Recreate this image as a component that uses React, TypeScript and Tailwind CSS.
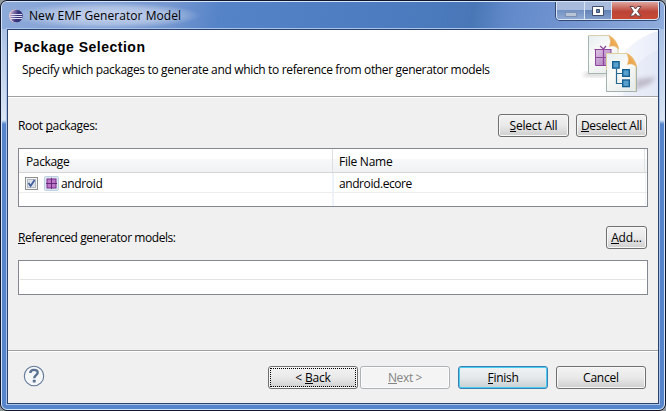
import React from "react";

const type = "font-['Open_Sans','Noto_Sans',sans-serif] text-[12px] leading-[16px] whitespace-nowrap";
const ui = `${type} text-black`;

const buttonLooks = {
  normal: "border-[#707070] text-black from-[#f3f3f3] via-[#e9e9e9] to-[#cfcfcf] shadow-[inset_0_0_0_1px_#f8f8f8]",
  disabled: "border-[#adb2b5] text-[#838383] from-[#f4f4f4] via-[#f4f4f4] to-[#f4f4f4] shadow-[inset_0_0_0_1px_#fcfcfc]",
  primary: "border-[#3c7fb1] text-black from-[#f0f3f4] via-[#e5e9eb] to-[#c9d0d2] shadow-[inset_0_0_0_1px_#48cdf5]",
};

function Key({ children }: { children: React.ReactNode }) {
  return <span className="inline-block h-[14px] border-b border-current leading-[16px]">{children}</span>;
}

function Button({ look = "normal", className = "", text = "", children }: { look?: keyof typeof buttonLooks; className?: string; text?: string; children: React.ReactNode }) {
  return (
    <button className={`${type} flex h-[23px] shrink-0 items-center justify-center rounded-[3px] border bg-linear-to-b from-0% via-50% ${buttonLooks[look]} ${className}`}>
      <span className={text}>{children}</span>
    </button>
  );
}

function EclipseLogo() {
  return (
    <svg className="h-[14px] w-[14px] shrink-0" viewBox="0 0 14 14">
      <defs>
        <linearGradient id="ecl" x1="0" y1="0" x2="1" y2="0.3">
          <stop offset="0" stopColor="#d5b2cc" />
          <stop offset=".3" stopColor="#8579ad" />
          <stop offset=".65" stopColor="#37337b" />
          <stop offset="1" stopColor="#39327a" />
        </linearGradient>
      </defs>
      <ellipse cx="6" cy="7" rx="6" ry="6.5" fill="#e9c6cc" />
      <circle cx="7.5" cy="7" r="6.3" fill="url(#ecl)" />
      <path d="M1.6 5.5h11.6M1.3 7.5h12M1.6 9.5h11.6" stroke="#dedff2" strokeWidth="1" />
    </svg>
  );
}

function WizardArt() {
  return (
    <svg className="h-[66px] w-[88px]" viewBox="570 30 88 66">
      <defs>
        <linearGradient id="swoosh" x1="0" y1="0" x2="1" y2="0">
          <stop offset="0" stopColor="#fff" />
          <stop offset="1" stopColor="#dfe5f6" />
        </linearGradient>
        <linearGradient id="page" x1="0" y1="0" x2=".6" y2="1">
          <stop offset="0" stopColor="#e6eef0" />
          <stop offset=".5" stopColor="#fbfbf8" />
          <stop offset="1" stopColor="#e8edec" />
        </linearGradient>
        <linearGradient id="fold" x1="0" y1="1" x2="1" y2="0">
          <stop offset="0" stopColor="#e08f2e" />
          <stop offset="1" stopColor="#fbc97f" />
        </linearGradient>
        <linearGradient id="gift" x1="0" y1="0" x2="1" y2="1">
          <stop offset="0" stopColor="#dec4e4" />
          <stop offset="1" stopColor="#a876b9" />
        </linearGradient>
        <filter id="soft" x="-50%" y="-50%" width="200%" height="200%"><feGaussianBlur stdDeviation="2" /></filter>
      </defs>
      <path d="M658 31C637 37 621 51 612 72L598 96H658Z" fill="url(#swoosh)" opacity=".7" />
      <path d="M658 50C641 56 632 69 623 96H658Z" fill="#d6ddf2" opacity=".3" />
      <path d="M635 90L637 79L656 77L650 84Z" fill="#86758a" opacity=".4" filter="url(#soft)" />
      <path d="M586 73H609L605 76H583Z" fill="#777" opacity=".45" filter="url(#soft)" />
      <path d="M588.5 35.5H609L618 46V73.5H588.5Z" fill="url(#page)" stroke="#d9cfad" />
      <path d="M588.5 36V73.5H607" fill="none" stroke="#a4b6b2" />
      <path d="M609 35.5Q612 41 609.5 46.5Q614 44 618.5 49Q617 39.5 609 35.5Z" fill="url(#fold)" stroke="#e8b56c" strokeWidth=".7" />
      <path d="M595.5 49.5H611V65.5H595.5Z" fill="url(#gift)" stroke="#8d459d" />
      <path d="M594.5 49.5H611.5M595.5 57.5H611M603.5 49V65M603.5 49L600 46M603.5 49L606 46" fill="none" stroke="#8d459d" strokeWidth="1.2" />
      <path d="M606.5 53.5H627L636 64V91.5H606.5Z" fill="url(#page)" stroke="#ded19f" />
      <path d="M606.5 70V91.5H636.5V67" fill="none" stroke="#a4b2ad" />
      <path d="M627 53.5Q630 59 627.5 64.5Q632 62 636.5 67Q635 57.5 627 53.5Z" fill="url(#fold)" stroke="#e8b56c" strokeWidth=".7" />
      <path d="M616.5 69V83.5H623M616.5 73.5H623" fill="none" stroke="#266894" strokeWidth="1.2" />
      <g fill="#57a0ce" stroke="#145f94" strokeWidth="1.4">
        <rect x="612.7" y="61.7" width="6.4" height="6.4" />
        <rect x="622.7" y="69.7" width="6.6" height="6.6" />
        <rect x="622.7" y="80" width="6.6" height="6.6" />
      </g>
    </svg>
  );
}

function WindowControls() {
  return (
    <div className="flex h-[18px] w-[103px] shrink-0 overflow-hidden rounded-b-[4px] border border-t-0 border-[#dce6f5] shadow-[0_0_0_1px_#304975]">
      <div className="flex w-[28px] items-center justify-center border-r border-[#d9e4f4] bg-linear-to-b from-[#a8bbdc] from-45% via-[#7391c2] via-50% to-[#90abd4]">
        <svg width="12" height="16" viewBox="0 0 12 16"><rect x=".5" y="9.5" width="11" height="4" fill="#b8c5d7" stroke="#7b90b2" /></svg>
      </div>
      <div className="flex w-[27px] items-center justify-center border-r border-[#d9e4f4] bg-linear-to-b from-[#a8bbdc] from-45% via-[#6484b7] via-50% to-[#819ecb]">
        <svg width="13" height="16" viewBox="0 0 13 16"><path fillRule="evenodd" d="M.5 3.5H11.5V12.5H.5ZM4.5 6.5V9.5H7.5V6.5Z" fill="#fff" stroke="#3e4d69" /></svg>
      </div>
      <div className="flex grow items-center justify-center bg-linear-to-b from-[#dda49e] from-0% via-[#bc4438] via-55% to-[#c74933]">
        <svg width="15" height="16" viewBox="0 0 15 16"><path d="M2 3.5H5.5L7.5 6L9.5 3.5H13L9.6 8.3L13 13H9.4L7.5 10.6L5.6 13H2L5.4 8.3Z" fill="#fff" stroke="#65444d" /></svg>
      </div>
    </div>
  );
}

function TitleBar() {
  return (
    <div className="flex h-[27px] w-full shrink-0 items-start justify-between bg-[linear-gradient(100deg,#8ca9d9_0%,#7698d0_25%,#5583c8_33%,#4a79bc_66%,#4977b6_71%,#6189c9_76%,#7294d0_85%,#8facdc_100%)] pl-[7px] pr-[5px]">
      <div className="flex h-[27px] items-center gap-[6px] bg-[radial-gradient(closest-side,#bccbe9_30%,#a9bee2_65%,transparent)] pr-[20px]">
        <EclipseLogo />
        <span className={`${ui} tracking-[0.06px]`}>New EMF Generator Model</span>
      </div>
      <WindowControls />
    </div>
  );
}

function Header() {
  return (
    <div className="flex h-[67px] shrink-0 justify-between border-b border-[#a0a0a0] bg-white">
      <div className="flex flex-col pt-[9px] pl-[6px]">
        <h1 className="font-['Liberation_Sans',sans-serif] text-[14px] font-bold leading-[16px] tracking-[0.5px] text-black whitespace-nowrap">Package Selection</h1>
        <p className={`${ui} mt-[7px] pl-[8px] tracking-[-0.34px]`}>Specify which packages to generate and which to reference from other generator models</p>
      </div>
      <WizardArt />
    </div>
  );
}

function PackageIcon() {
  return (
    <svg className="h-[15px] w-[15px] shrink-0" viewBox="0 0 15 15">
      <rect x=".5" y=".5" width="14" height="14" rx="1" fill="#dce6f0" stroke="#bfd0e1" />
      <rect x="3" y="3" width="9" height="9" fill="#bd79c8" stroke="#792d8d" />
      <path d="M2 7.5H13M7.5 1.8V13" stroke="#682878" />
    </svg>
  );
}

function PackageTable() {
  return (
    <div className="h-[59px] w-[630px] shrink-0 border border-[#828790] bg-white">
      <div className="flex h-[24px] border-b border-[#d5d5d5] bg-linear-to-b from-white from-45% via-[#f7f8fa] via-45% to-[#f1f2f4]">
        <div className="flex w-[314px] items-center border-r border-[#dedfe1] pl-[7px] pt-[2px]"><span className={`${ui} tracking-[-0.35px]`}>Package</span></div>
        <div className="mr-[2px] flex grow items-center border-r border-[#e2e3e5] pl-[6px] pt-[2px]"><span className={`${ui} tracking-[-0.25px]`}>File Name</span></div>
      </div>
      <div className="flex h-[20px] border-b border-[#ededed]">
        <div className="flex w-[315px] items-center border-r-2 border-[#edf2fb] pt-[2px] pl-[6px]">
          <svg className="h-[13px] w-[13px] shrink-0" viewBox="0 0 13 13">
            <rect x=".5" y=".5" width="12" height="12" fill="#f4f4f4" stroke="#8e8f8f" />
            <rect x="2.5" y="2.5" width="8" height="8" fill="#dce1e8" stroke="#b4bac2" />
            <path d="M3.5 6L5.6 9L9.6 3" fill="none" stroke="#405f9e" strokeWidth="1.8" />
          </svg>
          <span className="ml-[6px] flex"><PackageIcon /></span>
          <span className={`${ui} ml-[2px] tracking-[-0.35px]`}>android</span>
        </div>
        <div className="mr-[1px] flex grow items-center border-r border-[#edf2fb] pt-[2px] pl-[5px]"><span className={`${ui} tracking-[-0.42px]`}>android.ecore</span></div>
      </div>
      <div className="flex h-[13px]">
        <div className="w-[315px] border-r-2 border-[#edf2fb]" />
        <div className="mr-[1px] grow border-r border-[#edf2fb]" />
      </div>
    </div>
  );
}

function Footer() {
  return (
    <div className="flex h-[53px] shrink-0 items-start border-t border-[#a0a0a0] pr-[12px] pl-[15px] shadow-[inset_0_1px_0_#fff]">
      <svg className="mt-[14px] mr-auto h-[22px] w-[22px]" viewBox="0 0 22 22">
        <circle cx="11" cy="11" r="9.7" fill="#f5f6f7" stroke="#617798" strokeWidth="1.1" />
        <path d="M7.3 8C7.3 3.8 14.8 3.9 14.7 7.6C14.7 10 11.2 10.3 11.2 13.2" fill="none" stroke="#5b7193" strokeWidth="2.4" />
        <rect x="9.8" y="14.8" width="2.8" height="2.7" rx=".5" fill="#5b7193" />
      </svg>
      <div className="flex pt-[15px]">
        <Button className="w-[90px] outline outline-1 outline-dotted outline-offset-[-3px] outline-black" text="tracking-[-0.2px]">&lt; <Key>B</Key>ack</Button>
        <Button look="disabled" className="ml-[2px] w-[90px]" text="tracking-[-0.35px]"><Key>N</Key>ext &gt;</Button>
        <Button look="primary" className="ml-[8px] w-[90px]" text="tracking-[-0.3px]"><Key>F</Key>inish</Button>
        <Button className="ml-[8px] w-[90px]" text="tracking-[-0.2px]">Cancel</Button>
      </div>
    </div>
  );
}

export default function App() {
  return (
    <div className="h-[411px] w-[666px] overflow-hidden bg-[#8f969e]">
      <div className="h-full w-full overflow-hidden rounded-[7px] border border-[#10162b]">
        <div className="flex h-full w-full flex-col overflow-hidden rounded-[6px] border border-[#d6e6fa] bg-linear-to-b from-[#9db6df] from-0% via-[#dbe6f5] via-[29%] to-[#5685cb] to-[30%]">
          <TitleBar />
          <div className="mx-[4px] flex h-[375px] w-[654px] shrink-0 flex-col">
            <div className="-mt-px h-[377px] w-[654px] border border-[#a9c4ea]">
              <div className="flex h-[375px] w-[652px] flex-col border border-[#2a426c] bg-[#f0f0f0]">
                <Header />
                <main className="flex h-[253px] shrink-0 flex-col border-t border-white px-[10px]">
                  <div className="mt-[16px] flex h-[23px] items-center pr-px">
                    <span className={`${ui} mr-auto tracking-[-0.34px]`}>Root <Key>p</Key>ackages:</span>
                    <Button className="w-[71px]" text="tracking-[-0.2px]"><Key>S</Key>elect All</Button>
                    <Button className="ml-[7px] w-[71px]" text="tracking-[-0.27px]"><Key>D</Key>eselect All</Button>
                  </div>
                  <div className="mt-[11px]"><PackageTable /></div>
                  <div className="mt-[19px] flex h-[23px] items-center pr-px">
                    <span className={`${ui} mr-auto tracking-[-0.43px]`}><Key>R</Key>eferenced generator models:</span>
                    <Button className="w-[41px]" text="tracking-[-0.2px]"><Key>A</Key>dd...</Button>
                  </div>
                  <div className="mt-[11px] h-[35px] w-[630px] shrink-0 border border-[#828790] bg-white">
                    <div className="mx-px h-[19px] border-b border-[#e2e2e2]" />
                  </div>
                </main>
                <Footer />
              </div>
            </div>
          </div>
        </div>
      </div>
    </div>
  );
}
